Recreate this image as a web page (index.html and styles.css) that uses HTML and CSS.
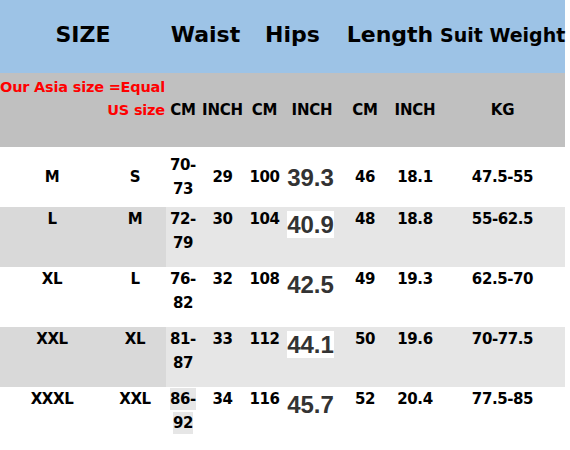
FILE: index.html
```html
<!DOCTYPE html>
<html>
<head>
<meta charset="utf-8">
<link rel="stylesheet" href="styles.css">
</head>
<body>
<div class="chart">
  <div class="grid head">
    <div class="h h-size">SIZE</div>
    <div class="h h-waist">Waist</div>
    <div class="h h-hips">Hips</div>
    <div class="h h-length">Length</div>
    <div class="h h-weight">Suit Weight</div>
  </div>
  <div class="grid sub">
    <div class="note">Our Asia size =Equal</div>
    <div class="us">US size</div>
    <div class="u">CM</div>
    <div class="u">INCH</div>
    <div class="u">CM</div>
    <div class="u">INCH</div>
    <div class="u">CM</div>
    <div class="u">INCH</div>
    <div class="u">KG</div>
  </div>

  <div class="grid row mid">
    <div class="c">M</div>
    <div class="c">S</div>
    <div class="c">70-<wbr>73</div>
    <div class="c">29</div>
    <div class="c">100</div>
    <div class="hip"><span>39.3</span></div>
    <div class="c">46</div>
    <div class="c">18.1</div>
    <div class="c">47.5-55</div>
  </div>

  <div class="grid row alt">
    <div class="c">L</div>
    <div class="c">M</div>
    <div class="c">72-<wbr>79</div>
    <div class="c">30</div>
    <div class="c">104</div>
    <div class="hip box"><span>40.9</span></div>
    <div class="c">48</div>
    <div class="c">18.8</div>
    <div class="c">55-62.5</div>
  </div>

  <div class="grid row">
    <div class="c">XL</div>
    <div class="c">L</div>
    <div class="c">76-<wbr>82</div>
    <div class="c">32</div>
    <div class="c">108</div>
    <div class="hip"><span>42.5</span></div>
    <div class="c">49</div>
    <div class="c">19.3</div>
    <div class="c">62.5-70</div>
  </div>

  <div class="grid row alt">
    <div class="c">XXL</div>
    <div class="c">XL</div>
    <div class="c">81-<wbr>87</div>
    <div class="c">33</div>
    <div class="c">112</div>
    <div class="hip box"><span>44.1</span></div>
    <div class="c">50</div>
    <div class="c">19.6</div>
    <div class="c">70-77.5</div>
  </div>

  <div class="grid row">
    <div class="c">XXXL</div>
    <div class="c">XXL</div>
    <div class="c"><span class="hl">86-<wbr>92</span></div>
    <div class="c">34</div>
    <div class="c">116</div>
    <div class="hip"><span>45.7</span></div>
    <div class="c">52</div>
    <div class="c">20.4</div>
    <div class="c">77.5-85</div>
  </div>
</div>
</body>
</html>
```

FILE: styles.css
```css
* {
  box-sizing: border-box;
}

html, body {
  margin: 0;
  padding: 0;
  background: #ffffff;
}

body {
  font-family: "DejaVu Sans", Verdana, sans-serif;
  font-weight: bold;
  color: #000000;
}

.chart {
  width: 565px;
}

.grid {
  display: grid;
  grid-template-columns: 104px 62px 34px 45px 39px 56px 50px 50px 125px;
  width: 565px;
}

/* top blue header */
.head {
  height: 73px;
  background: #9dc3e6;
  padding-top: 22px;
  align-items: baseline;
}

.h {
  font-size: 22px;
  line-height: 26px;
  text-align: center;
  white-space: nowrap;
}

.h-size { grid-column: 1 / 3; }
.h-waist { grid-column: 3 / 5; }
.h-hips { grid-column: 5 / 7; }
.h-length { grid-column: 7 / 9; }
.h-weight {
  grid-column: 9 / 10;
  font-size: 19px;
}

/* grey unit header */
.sub {
  height: 74px;
  background: #c0c0c0;
  padding-top: 4px;
  grid-template-rows: 20px 20px;
  row-gap: 3px;
  align-content: start;
}

.note {
  grid-column: 1 / -1;
  color: #ff0000;
  font-size: 14.5px;
  letter-spacing: -0.2px;
  line-height: 20px;
  white-space: nowrap;
}

.us {
  grid-column: 2;
  color: #ff0000;
  font-size: 14.5px;
  letter-spacing: -0.2px;
  line-height: 20px;
  text-align: right;
  padding-right: 1px;
  white-space: nowrap;
}

.u {
  font-size: 15px;
  letter-spacing: -0.2px;
  line-height: 20px;
  text-align: center;
  white-space: nowrap;
}

/* data rows */
.row {
  height: 60px;
  font-size: 15px;
  letter-spacing: -0.4px;
  line-height: 24px;
}

.row.mid {
  align-items: center;
}

.row.alt {
  background: linear-gradient(to right, #d9d9d9 166px, #e6e6e6 166px);
}

.c {
  text-align: center;
  white-space: normal;
}

.hip {
  display: flex;
  justify-content: center;
  align-items: flex-start;
  padding-right: 3px;
}

.hip span {
  display: block;
  margin-top: 4px;
  font-family: "Liberation Sans", Arial, sans-serif;
  font-weight: bold;
  font-size: 24px;
  letter-spacing: 0;
  line-height: 27px;
  color: #333333;
}

.mid .hip span {
  margin-top: 0;
}

.hip.box span {
  background: #ffffff;
}

.hl {
  background: #e6e6e6;
  padding: 2px 0;
}
```
